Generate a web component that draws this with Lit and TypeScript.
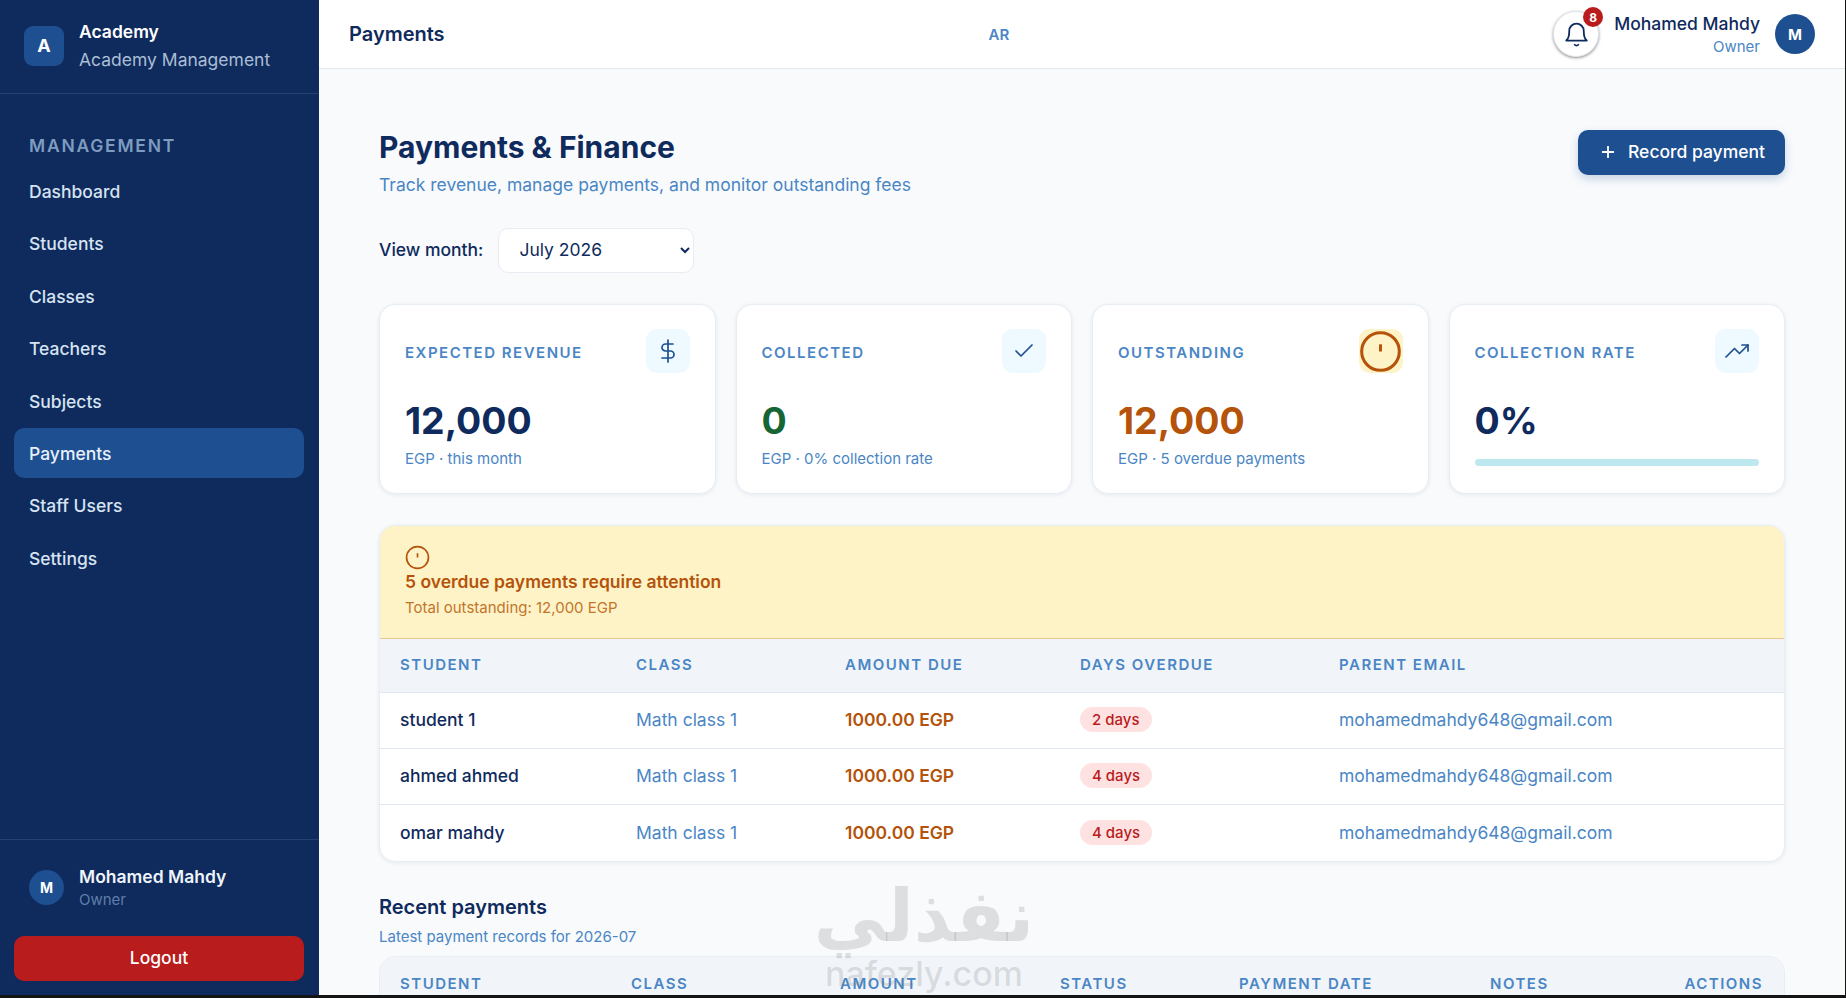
import { LitElement, css, html, svg } from "lit";
import { customElement } from "lit/decorators.js";

const nav = ["Dashboard", "Students", "Classes", "Teachers", "Subjects", "Payments", "Staff Users", "Settings"];

const overdue = [
  { student: "student 1", days: "2 days" },
  { student: "ahmed ahmed", days: "4 days" },
  { student: "omar mahdy", days: "4 days" },
];

const alertIcon = svg`<circle cx="12" cy="12" r="10.5"></circle><line x1="12" y1="8" x2="12" y2="12"></line>`;

@customElement("app-root")
export class AppRoot extends LitElement {
  static styles = css`
    :host {
      display: block;
      height: 998px;
      background: #141414;
      font-family: Inter, "Liberation Sans", sans-serif;
      color: #0f2a5c;
    }
    * {
      box-sizing: border-box;
    }
    .shell {
      display: flex;
      width: 1845px;
      height: 995px;
      overflow: hidden;
      background: #f8fafc;
    }
    .sidebar {
      flex: 0 0 319px;
      display: flex;
      flex-direction: column;
      background: #0f2a5c;
    }
    .brand {
      height: 94px;
      flex: none;
      display: flex;
      align-items: center;
      gap: 15px;
      padding: 0 24px 2px;
      border-bottom: 1px solid #27406f;
    }
    .logo {
      width: 40px;
      height: 40px;
      border-radius: 9px;
      background: #1e4f91;
      color: #fff;
      display: flex;
      align-items: center;
      justify-content: center;
      font-weight: 700;
      font-size: 18px;
    }
    .brand-name {
      font-size: 17.5px;
      font-weight: 600;
      line-height: 24px;
      color: #fff;
      margin-bottom: 4px;
    }
    .brand-sub {
      font-size: 17.5px;
      line-height: 24px;
      color: #a9bed6;
    }
    .nav {
      flex: 1;
      padding: 42px 15px 0 14px;
    }
    .nav-title {
      padding-left: 15px;
      font-size: 17.5px;
      line-height: 20px;
      font-weight: 600;
      letter-spacing: 1.76px;
      color: #7e9cc0;
      margin-bottom: 10.5px;
    }
    .nav-item {
      height: 50px;
      margin-bottom: 2.4px;
      padding-left: 15px;
      display: flex;
      align-items: center;
      border-radius: 10px;
      font-size: 17.5px;
      font-weight: 500;
      color: #d5e3f2;
    }
    .nav-item.active {
      background: #1e4f91;
      color: #e8f1fa;
    }
    .side-foot {
      flex: none;
      height: 156px;
      border-top: 1px solid #27406f;
      padding: 24px 15px 0 14px;
    }
    .side-user {
      display: flex;
      align-items: center;
      gap: 15px;
      padding-left: 15px;
      margin-bottom: 25px;
    }
    .side-avatar {
      width: 35px;
      height: 35px;
      border-radius: 50%;
      background: #1e4f91;
      color: #fff;
      display: flex;
      align-items: center;
      justify-content: center;
      font-size: 14px;
      font-weight: 700;
    }
    .side-name {
      font-size: 17.5px;
      font-weight: 600;
      line-height: 24px;
      color: #eef4fb;
      margin-top: 1px;
    }
    .side-role {
      font-size: 15px;
      line-height: 22px;
      color: #5f7fa8;
    }
    .logout {
      display: block;
      width: 100%;
      height: 45px;
      padding: 0 0 3px;
      border: none;
      border-radius: 10px;
      background: #b91c1c;
      color: #fff;
      font: 500 17.5px Inter, "Liberation Sans", sans-serif;
    }
    .content {
      flex: 1;
      min-width: 0;
      display: flex;
      flex-direction: column;
      position: relative;
    }
    .topbar {
      height: 69px;
      flex: none;
      display: flex;
      align-items: center;
      justify-content: space-between;
      padding: 0 30px;
      background: #fff;
      border-bottom: 1px solid #e2e8f0;
    }
    .top-title {
      font-size: 20px;
      font-weight: 600;
    }
    .lang {
      font-size: 15px;
      font-weight: 600;
      color: #4a86c5;
    }
    .top-right {
      display: flex;
      align-items: center;
    }
    .bell {
      position: relative;
      width: 46px;
      height: 46px;
      border-radius: 50%;
      border: 1px solid #e2e8f0;
      background: #fff;
      box-shadow: 0 1px 3px rgba(0, 0, 0, 0.45);
      display: flex;
      align-items: center;
      justify-content: center;
      margin-right: 15px;
    }
    .bell svg {
      width: 29px;
      height: 29px;
      fill: none;
      stroke: #0f2a5c;
      stroke-width: 1.5;
      stroke-linecap: round;
      stroke-linejoin: round;
    }
    .badge {
      position: absolute;
      top: -5px;
      right: -5px;
      width: 20px;
      height: 20px;
      border-radius: 50%;
      background: #b91c1c;
      color: #fff;
      font-size: 12px;
      font-weight: 700;
      display: flex;
      align-items: center;
      justify-content: center;
    }
    .top-user {
      text-align: right;
      margin-right: 15px;
      padding-top: 2px;
    }
    .top-name {
      font-size: 17.5px;
      font-weight: 500;
      line-height: 24px;
    }
    .top-role {
      font-size: 15px;
      line-height: 22px;
      color: #4a86c5;
    }
    .top-avatar {
      width: 40px;
      height: 40px;
      border-radius: 50%;
      background: #1e4f91;
      color: #fff;
      display: flex;
      align-items: center;
      justify-content: center;
      font-size: 15px;
      font-weight: 700;
    }
    .main {
      flex: 1;
      min-height: 0;
      overflow: hidden;
      padding: 60px 60px 0;
    }
    .page-head {
      display: flex;
      justify-content: space-between;
      align-items: flex-start;
      height: 70px;
    }
    h1 {
      margin: 0 0 8px;
      font-size: 30px;
      line-height: 36px;
      font-weight: 700;
    }
    .page-sub {
      font-size: 17.5px;
      line-height: 24px;
      color: #4a86c5;
    }
    .primary {
      margin-top: 1px;
      width: 207px;
      height: 45px;
      border: none;
      border-radius: 10px;
      background: #1e4f91;
      color: #fff;
      font: 500 17.5px Inter, "Liberation Sans", sans-serif;
      display: flex;
      align-items: center;
      gap: 12px;
      padding: 0 0 2px 22px;
      box-shadow: 0 4px 10px rgba(30, 79, 145, 0.22);
    }
    .primary svg {
      width: 16px;
      height: 16px;
      stroke: #fff;
      stroke-width: 1.8;
      fill: none;
      flex: none;
    }
    .filter {
      display: flex;
      align-items: center;
      gap: 15px;
      margin-top: 29px;
      height: 44px;
    }
    .filter label {
      font-size: 17.5px;
      font-weight: 500;
      padding-bottom: 2px;
    }
    select {
      width: 196px;
      height: 45px;
      padding: 0 16px 2px;
      border: 1px solid #e8edf3;
      border-radius: 10px;
      background: #fff;
      color: #0f2a5c;
      font: 400 17.5px Inter, "Liberation Sans", sans-serif;
    }
    .cards {
      display: grid;
      grid-template-columns: repeat(4, 1fr);
      gap: 20px;
      margin-top: 32px;
    }
    .card {
      height: 190px;
      padding: 24px 25px;
      background: #fff;
      border: 1px solid #e8edf3;
      border-radius: 16px;
      box-shadow: 0 1px 4px rgba(15, 42, 92, 0.08);
    }
    .card-head {
      display: flex;
      justify-content: space-between;
      align-items: center;
      height: 44px;
      margin-bottom: 26px;
    }
    .card-label {
      font-size: 15px;
      font-weight: 600;
      letter-spacing: 1.5px;
      color: #4a86c5;
      padding-top: 2px;
    }
    .card-icon {
      width: 44px;
      height: 44px;
      border-radius: 11px;
      background: #eefaff;
      display: flex;
      align-items: center;
      justify-content: center;
    }
    .card-icon svg {
      width: 24px;
      height: 24px;
      fill: none;
      stroke: #1e4f91;
      stroke-width: 1.7;
      stroke-linecap: round;
      stroke-linejoin: round;
    }
    .card-icon.warn {
      background: #fef3c7;
    }
    .card-icon.warn svg {
      width: 43px;
      height: 43px;
      flex: none;
      stroke: #b45309;
      stroke-width: 1.7;
      stroke-linecap: butt;
    }
    .value {
      font-size: 37.4px;
      line-height: 44px;
      font-weight: 700;
      margin-bottom: 5px;
    }
    .value.green {
      color: #166534;
    }
    .value.amber {
      color: #b45309;
    }
    .card-note {
      font-size: 15px;
      line-height: 22px;
      color: #4a86c5;
    }
    .progress {
      height: 7px;
      margin-top: 16px;
      border-radius: 4px;
      background: #bde8f0;
    }
    .overdue {
      margin-top: 31px;
      background: #fff;
      border: 1px solid #e8edf3;
      border-radius: 16px;
      overflow: hidden;
      box-shadow: 0 1px 4px rgba(15, 42, 92, 0.08);
    }
    .alert {
      height: 113px;
      padding: 19px 25px 0;
      background: #fef3c7;
      border-bottom: 1px solid #e6c98f;
      color: #b45309;
    }
    .alert svg {
      display: block;
      width: 25px;
      height: 25px;
      fill: none;
      stroke: #b45309;
      stroke-width: 1.6;
    }
    .alert-title {
      font-size: 17.5px;
      font-weight: 600;
      line-height: 24px;
    }
    .alert-sub {
      font-size: 15px;
      line-height: 22px;
      margin-top: 3px;
      color: #c2752b;
    }
    table {
      width: 100%;
      border-collapse: collapse;
      table-layout: fixed;
    }
    th {
      height: 53px;
      padding: 0 0 1px 20px;
      text-align: left;
      background: #f1f5f9;
      color: #4a86c5;
      font-size: 15px;
      font-weight: 600;
      letter-spacing: 1.5px;
      border-bottom: 1px solid #e2e8f0;
    }
    td {
      height: 56px;
      padding: 0 0 1px 20px;
      font-size: 17.5px;
      border-bottom: 1px solid #e2e8f0;
    }
    tr:last-child td {
      height: 57px;
      border-bottom: none;
    }
    td.name {
      font-weight: 500;
    }
    td.muted {
      color: #4a86c5;
    }
    td.due {
      color: #b45309;
      font-weight: 600;
    }
    .pill {
      display: inline-block;
      padding: 0 12px;
      height: 25px;
      line-height: 25px;
      border-radius: 13px;
      background: #fee2e2;
      color: #b91c1c;
      font-size: 15px;
      font-weight: 500;
    }
    .c1 { width: 236px; }
    .c2 { width: 209px; }
    .c3 { width: 235px; }
    .c4 { width: 259px; }
    h2 {
      margin: 30px 0 0;
      font-size: 20px;
      line-height: 30px;
      font-weight: 600;
    }
    .recent-sub {
      font-size: 15px;
      line-height: 22px;
      margin-top: 4px;
      color: #4a86c5;
    }
    .recent {
      margin-top: 8px;
      border: 1px solid #e8edf3;
      border-radius: 16px 16px 0 0;
      overflow: hidden;
    }
    .recent th {
      height: 50px;
      padding-top: 4px;
    }
    .r1 { width: 231px; }
    .r2 { width: 209px; }
    .r3 { width: 220px; }
    .r4 { width: 179px; }
    .r5 { width: 251px; }
    .r6 { width: 130px; }
    th.end {
      text-align: right;
      padding-right: 21px;
    }
    .watermark {
      position: absolute;
      left: 485px;
      top: 876px;
      width: 240px;
      text-align: center;
      color: rgba(110, 110, 110, 0.2);
      pointer-events: none;
    }
    .wm-ar {
      font-family: "DejaVu Sans", sans-serif;
      font-size: 72px;
      line-height: 80px;
      font-weight: 700;
    }
    .wm-en {
      font-size: 34px;
      line-height: 30px;
      font-weight: 500;
      margin-top: 3px;
    }
  `;

  render() {
    return html`
      <div class="shell">
        <aside class="sidebar">
          <div class="brand">
            <div class="logo">A</div>
            <div>
              <div class="brand-name">Academy</div>
              <div class="brand-sub">Academy Management</div>
            </div>
          </div>
          <nav class="nav">
            <div class="nav-title">MANAGEMENT</div>
            ${nav.map((n) => html`<div class="nav-item ${n === "Payments" ? "active" : ""}">${n}</div>`)}
          </nav>
          <div class="side-foot">
            <div class="side-user">
              <div class="side-avatar">M</div>
              <div>
                <div class="side-name">Mohamed Mahdy</div>
                <div class="side-role">Owner</div>
              </div>
            </div>
            <button class="logout">Logout</button>
          </div>
        </aside>
        <div class="content">
          <header class="topbar">
            <div class="top-title">Payments</div>
            <div class="lang">AR</div>
            <div class="top-right">
              <div class="bell">
                <svg viewBox="0 0 24 24">
                  <path d="M18 9a6 6 0 0 0-12 0c0 6-2.5 8-2.5 8h17S18 15 18 9"></path>
                  <path d="M10.5 20.5a2 2 0 0 0 3 0"></path>
                </svg>
                <span class="badge">8</span>
              </div>
              <div class="top-user">
                <div class="top-name">Mohamed Mahdy</div>
                <div class="top-role">Owner</div>
              </div>
              <div class="top-avatar">M</div>
            </div>
          </header>
          <main class="main">
            <div class="page-head">
              <div>
                <h1>Payments &amp; Finance</h1>
                <div class="page-sub">Track revenue, manage payments, and monitor outstanding fees</div>
              </div>
              <button class="primary">
                <svg viewBox="0 0 16 16"><path d="M8 2v12M2 8h12"></path></svg>
                Record payment
              </button>
            </div>
            <div class="filter">
              <label>View month:</label>
              <select><option>July 2026</option></select>
            </div>
            <section class="cards">
              <div class="card">
                <div class="card-head">
                  <span class="card-label">EXPECTED REVENUE</span>
                  <span class="card-icon">
                    <svg viewBox="0 0 24 24"><path d="M12 1v22M17 5H9.5a3.5 3.5 0 0 0 0 7h5a3.5 3.5 0 0 1 0 7H6"></path></svg>
                  </span>
                </div>
                <div class="value">12,000</div>
                <div class="card-note">EGP · this month</div>
              </div>
              <div class="card">
                <div class="card-head">
                  <span class="card-label">COLLECTED</span>
                  <span class="card-icon">
                    <svg viewBox="0 0 24 24"><path d="M20 6 9 17l-5-5"></path></svg>
                  </span>
                </div>
                <div class="value green">0</div>
                <div class="card-note">EGP · 0% collection rate</div>
              </div>
              <div class="card">
                <div class="card-head">
                  <span class="card-label">OUTSTANDING</span>
                  <span class="card-icon warn"><svg viewBox="0 0 24 24">${alertIcon}</svg></span>
                </div>
                <div class="value amber">12,000</div>
                <div class="card-note">EGP · 5 overdue payments</div>
              </div>
              <div class="card">
                <div class="card-head">
                  <span class="card-label">COLLECTION RATE</span>
                  <span class="card-icon">
                    <svg viewBox="0 0 24 24"><path d="m1 18 8.5-8.5 5 5L23 6"></path><path d="M17 6h6v6"></path></svg>
                  </span>
                </div>
                <div class="value">0%</div>
                <div class="progress"></div>
              </div>
            </section>
            <section class="overdue">
              <div class="alert">
                <svg viewBox="0 0 24 24">${alertIcon}</svg>
                <div class="alert-title">5 overdue payments require attention</div>
                <div class="alert-sub">Total outstanding: 12,000 EGP</div>
              </div>
              <table>
                <thead>
                  <tr>
                    <th class="c1">STUDENT</th>
                    <th class="c2">CLASS</th>
                    <th class="c3">AMOUNT DUE</th>
                    <th class="c4">DAYS OVERDUE</th>
                    <th>PARENT EMAIL</th>
                  </tr>
                </thead>
                <tbody>
                  ${overdue.map(
                    (r) => html`<tr>
                      <td class="name">${r.student}</td>
                      <td class="muted">Math class 1</td>
                      <td class="due">1000.00 EGP</td>
                      <td><span class="pill">${r.days}</span></td>
                      <td class="muted">mohamedmahdy648@gmail.com</td>
                    </tr>`
                  )}
                </tbody>
              </table>
            </section>
            <h2>Recent payments</h2>
            <div class="recent-sub">Latest payment records for 2026-07</div>
            <div class="recent">
              <table>
                <thead>
                  <tr>
                    <th class="r1">STUDENT</th>
                    <th class="r2">CLASS</th>
                    <th class="r3">AMOUNT</th>
                    <th class="r4">STATUS</th>
                    <th class="r5">PAYMENT DATE</th>
                    <th class="r6">NOTES</th>
                    <th class="end">ACTIONS</th>
                  </tr>
                </thead>
              </table>
            </div>
          </main>
          <div class="watermark">
            <div class="wm-ar" dir="rtl">نفذلي</div>
            <div class="wm-en">nafezly.com</div>
          </div>
        </div>
      </div>
    `;
  }
}
